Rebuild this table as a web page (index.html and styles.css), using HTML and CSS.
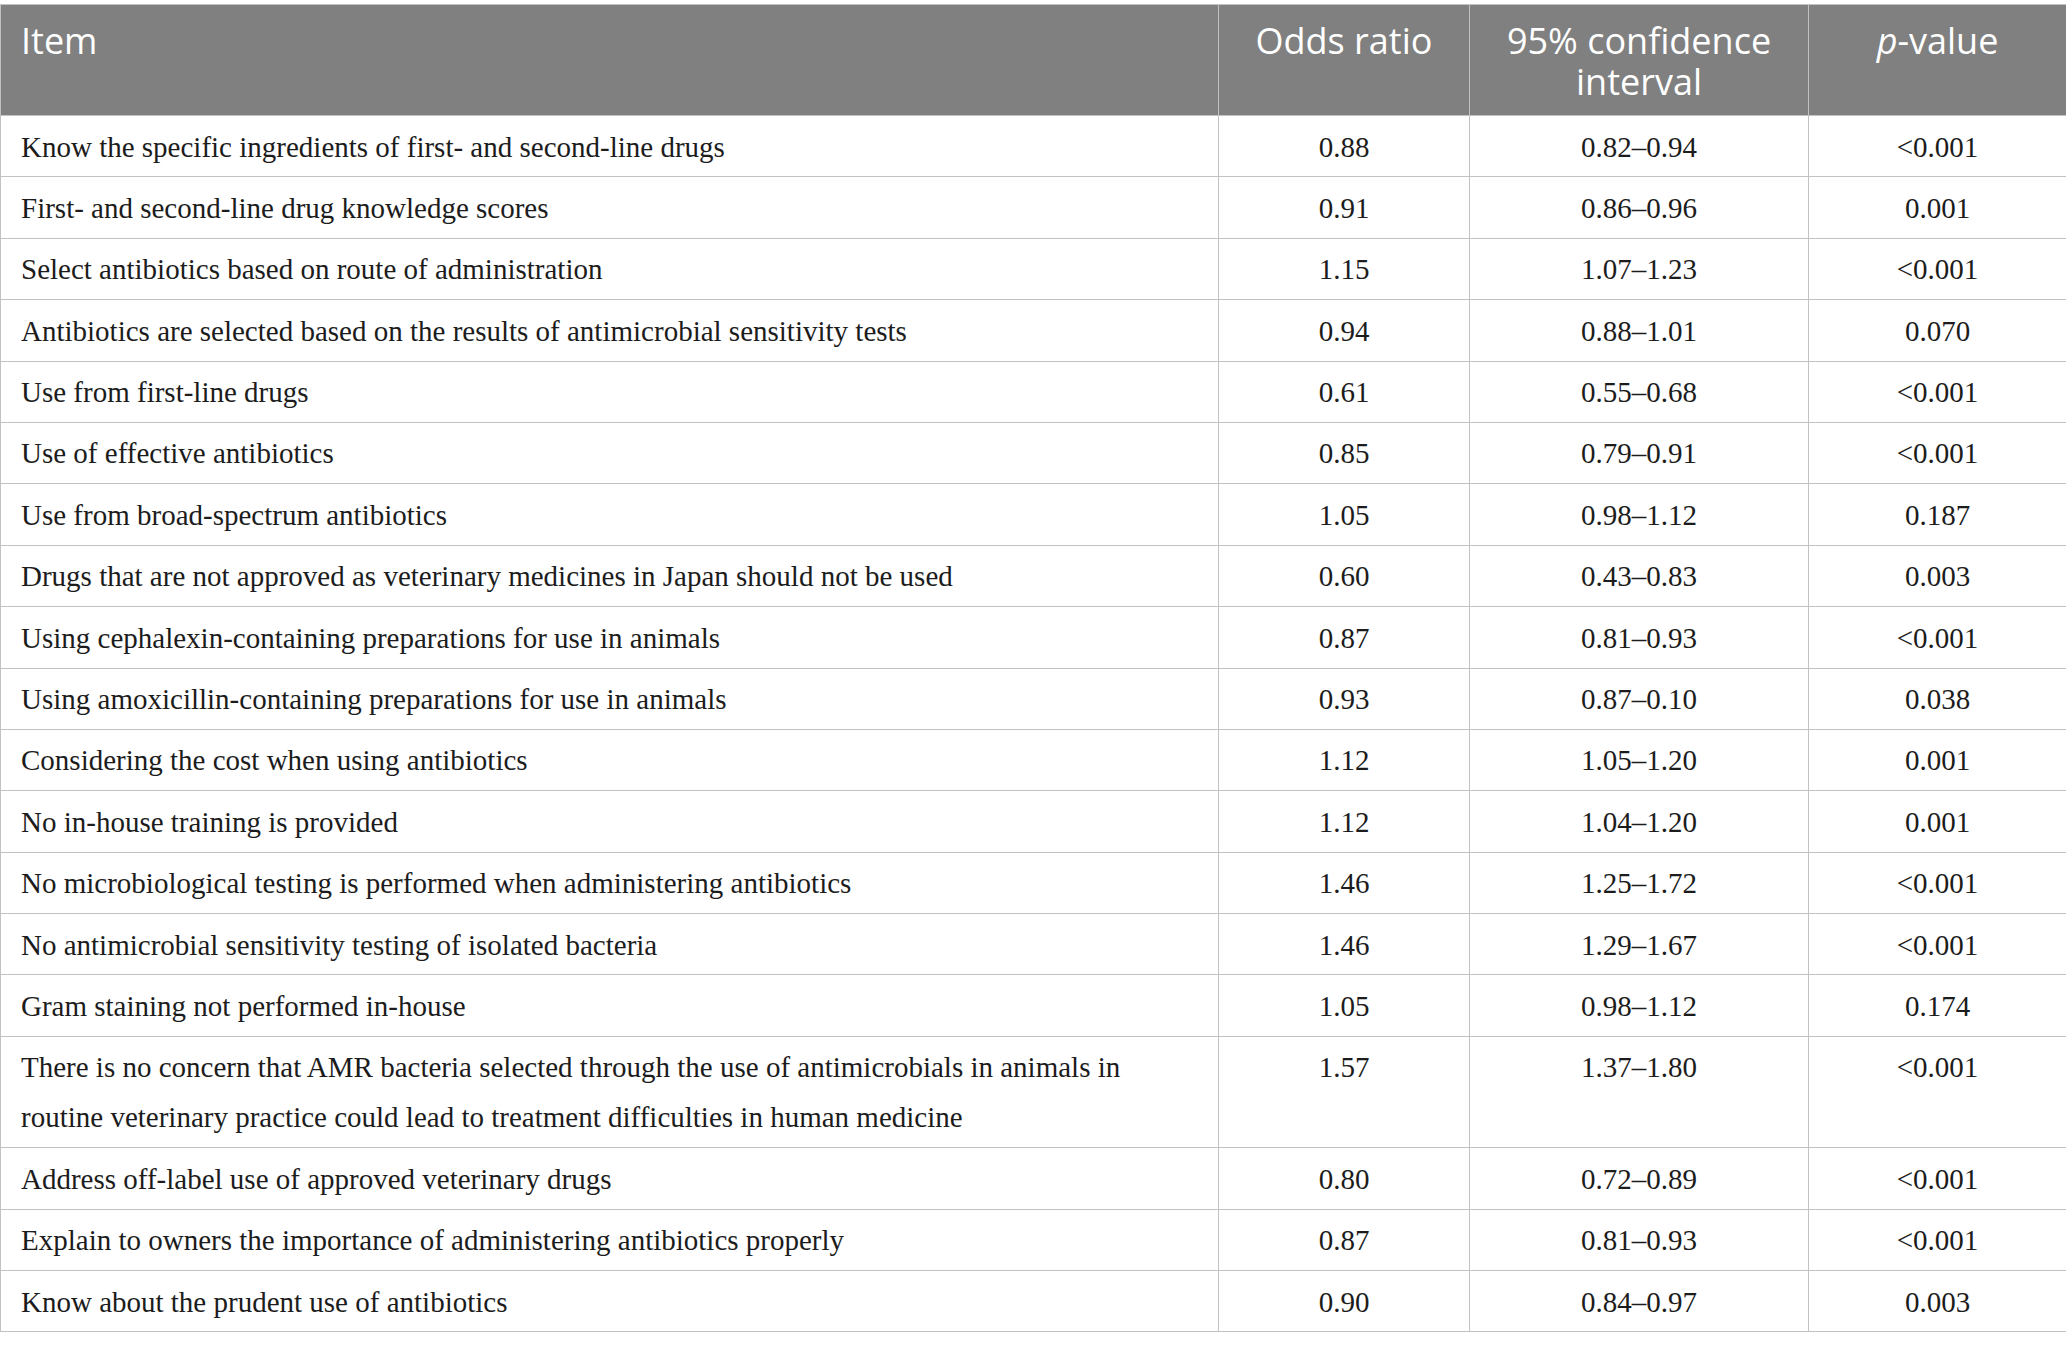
FILE: index.html
```html
<!DOCTYPE html>
<html lang="en">
<head>
  <meta charset="UTF-8">
  <title>Odds ratios for antibiotic use items</title>
  <link rel="stylesheet" href="styles.css">
</head>
<body>
  <div class="table-wrap">
    <table class="odds-table">
      <colgroup>
        <col class="col-item">
        <col class="col-or">
        <col class="col-ci">
        <col class="col-p">
      </colgroup>
      <thead>
        <tr>
          <th class="item">Item</th>
          <th>Odds ratio</th>
          <th>95% confidence interval</th>
          <th><i>p</i>-value</th>
        </tr>
      </thead>
      <tbody>
        <tr><td class="item">Know the specific ingredients of first- and second-line drugs</td><td>0.88</td><td>0.82–0.94</td><td>&lt;0.001</td></tr>
        <tr><td class="item">First- and second-line drug knowledge scores</td><td>0.91</td><td>0.86–0.96</td><td>0.001</td></tr>
        <tr><td class="item">Select antibiotics based on route of administration</td><td>1.15</td><td>1.07–1.23</td><td>&lt;0.001</td></tr>
        <tr><td class="item">Antibiotics are selected based on the results of antimicrobial sensitivity tests</td><td>0.94</td><td>0.88–1.01</td><td>0.070</td></tr>
        <tr><td class="item">Use from first-line drugs</td><td>0.61</td><td>0.55–0.68</td><td>&lt;0.001</td></tr>
        <tr><td class="item">Use of effective antibiotics</td><td>0.85</td><td>0.79–0.91</td><td>&lt;0.001</td></tr>
        <tr><td class="item">Use from broad-spectrum antibiotics</td><td>1.05</td><td>0.98–1.12</td><td>0.187</td></tr>
        <tr><td class="item">Drugs that are not approved as veterinary medicines in Japan should not be used</td><td>0.60</td><td>0.43–0.83</td><td>0.003</td></tr>
        <tr><td class="item">Using cephalexin-containing preparations for use in animals</td><td>0.87</td><td>0.81–0.93</td><td>&lt;0.001</td></tr>
        <tr><td class="item">Using amoxicillin-containing preparations for use in animals</td><td>0.93</td><td>0.87–0.10</td><td>0.038</td></tr>
        <tr><td class="item">Considering the cost when using antibiotics</td><td>1.12</td><td>1.05–1.20</td><td>0.001</td></tr>
        <tr><td class="item">No in-house training is provided</td><td>1.12</td><td>1.04–1.20</td><td>0.001</td></tr>
        <tr><td class="item">No microbiological testing is performed when administering antibiotics</td><td>1.46</td><td>1.25–1.72</td><td>&lt;0.001</td></tr>
        <tr><td class="item">No antimicrobial sensitivity testing of isolated bacteria</td><td>1.46</td><td>1.29–1.67</td><td>&lt;0.001</td></tr>
        <tr><td class="item">Gram staining not performed in-house</td><td>1.05</td><td>0.98–1.12</td><td>0.174</td></tr>
        <tr><td class="item">There is no concern that AMR bacteria selected through the use of antimicrobials in animals in routine veterinary practice could lead to treatment difficulties in human medicine</td><td>1.57</td><td>1.37–1.80</td><td>&lt;0.001</td></tr>
        <tr><td class="item">Address off-label use of approved veterinary drugs</td><td>0.80</td><td>0.72–0.89</td><td>&lt;0.001</td></tr>
        <tr><td class="item">Explain to owners the importance of administering antibiotics properly</td><td>0.87</td><td>0.81–0.93</td><td>&lt;0.001</td></tr>
        <tr><td class="item">Know about the prudent use of antibiotics</td><td>0.90</td><td>0.84–0.97</td><td>0.003</td></tr>
      </tbody>
    </table>
  </div>
</body>
</html>
```

FILE: styles.css
```css
* {
  margin: 0;
  padding: 0;
  box-sizing: border-box;
}
body {
  background: #fff;
  font-family: 'Liberation Serif', 'Times New Roman', serif;
  color: #1c1c1c;
}
.table-wrap {
  padding-top: 4px;
}
.odds-table {
  width: 100%;
  border-collapse: collapse;
  table-layout: fixed;
}
.col-item { width: 1218px; }
.col-or { width: 251px; }
.col-ci { width: 339px; }
.col-p { width: 258px; }

.odds-table th,
.odds-table td {
  border: 1px solid #c2c2c2;
  text-align: center;
  vertical-align: top;
}
.odds-table th {
  background: #7f807f;
  color: #fff;
  font-family: 'Open Sans', 'Noto Sans', sans-serif;
  font-weight: 400;
  font-size: 36px;
  line-height: 41px;
  padding: 15px 20px 13px;
}
.odds-table th i {
  font-style: italic;
}
.odds-table td {
  font-size: 29px;
  line-height: 50px;
  padding: 5.5px 20px 4.9px;
}
.odds-table .item {
  text-align: left;
}
```
